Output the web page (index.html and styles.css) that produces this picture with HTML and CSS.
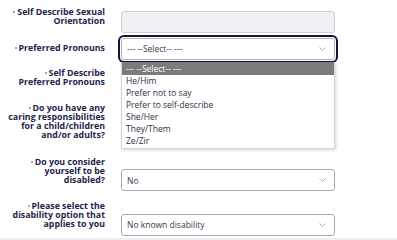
FILE: index.html
```html
<!DOCTYPE html>
<html>
<head>
<meta charset="utf-8">
<link rel="stylesheet" href="styles.css">
</head>
<body>
<div class="form">
  <div class="row r1">
    <label class="lbl"><span class="dot"></span>Self Describe Sexual Orientation</label>
    <div class="field"><div class="input disabled"></div></div>
  </div>
  <div class="row r2">
    <label class="lbl"><span class="dot"></span>Preferred Pronouns</label>
    <div class="field">
      <div class="select focused"><span class="val">--- --Select-- ---</span><svg class="chev" viewBox="0 0 7 4" width="7" height="4"><path d="M0.5 0.5 L3.5 3.3 L6.5 0.5" fill="none" stroke="#9a98a8" stroke-width="0.8"/></svg></div>
      <ul class="menu">
        <li class="hl">--- --Select-- ---</li>
        <li>He/Him</li>
        <li>Prefer not to say</li>
        <li>Prefer to self-describe</li>
        <li>She/Her</li>
        <li>They/Them</li>
        <li>Ze/Zir</li>
      </ul>
    </div>
  </div>
  <div class="row r3">
    <label class="lbl"><span class="dot"></span>Self Describe Preferred Pronouns</label>
    <div class="field"><div class="input"></div></div>
  </div>
  <div class="row r4">
    <label class="lbl"><span class="dot"></span>Do you have any caring responsibilities for a child/children and/or adults?</label>
    <div class="field"><div class="select"></div></div>
  </div>
  <div class="row r5">
    <label class="lbl"><span class="dot"></span>Do you consider yourself to be disabled?</label>
    <div class="field"><div class="select"><span class="val">No</span><svg class="chev" viewBox="0 0 7 4" width="7" height="4"><path d="M0.5 0.5 L3.5 3.3 L6.5 0.5" fill="none" stroke="#9a98a8" stroke-width="0.8"/></svg></div></div>
  </div>
  <div class="row r6">
    <label class="lbl"><span class="dot"></span>Please select the disability option that applies to you</label>
    <div class="field"><div class="select"><span class="val">No known disability</span><svg class="chev" viewBox="0 0 7 4" width="7" height="4"><path d="M0.5 0.5 L3.5 3.3 L6.5 0.5" fill="none" stroke="#9a98a8" stroke-width="0.8"/></svg></div></div>
  </div>
</div>
<div class="strip"></div>
</body>
</html>
```
FILE: styles.css
```css
html, body {
  margin: 0;
  padding: 0;
  background: #ffffff;
}
body {
  width: 397px;
  height: 240px;
  overflow: hidden;
  font-family: "Open Sans", "Noto Sans", sans-serif;
  position: relative;
}
.form {
  display: flex;
  flex-direction: column;
  padding-top: 8px;
}
.row {
  display: flex;
  align-items: flex-end;
  margin-bottom: 11px;
}
.row.r1 { margin-bottom: 5px; }
.row.r2 { margin-bottom: 9px; }
.lbl {
  width: 100px;
  margin-left: 5px;
  margin-right: 16px;
  flex: none;
  text-align: right;
  font-weight: 700;
  font-size: 8.8px;
  line-height: 9px;
  color: #1e1e4c;
  padding-bottom: 6.5px;
}
.dot {
  display: inline-block;
  width: 2px;
  height: 2px;
  border-radius: 50%;
  background: #8a8a98;
  margin-right: 2px;
  vertical-align: 2px;
}
.field {
  width: 214px;
  flex: none;
  position: relative;
}
.input, .select {
  box-sizing: border-box;
  height: 22px;
  border: 1px solid #aaa6ba;
  border-radius: 3px;
  background: #fff;
}
.input.disabled {
  background: #f1f0f4;
  border-color: #cfcdd8;
}
.select {
  display: flex;
  align-items: center;
  justify-content: space-between;
  padding: 0 8px 0 5px;
  font-size: 8.5px;
  color: #3a3a48;
}
.select.focused {
  outline: 2px solid #14143c;
  outline-offset: 1px;
  border-color: #b4b0c4;
}
.chev { display: block; }
.menu {
  position: absolute;
  left: 0;
  top: 24px;
  width: 214px;
  box-sizing: border-box;
  margin: 0;
  padding: 0;
  list-style: none;
  background: #fff;
  border: 1px solid #d4d4d4;
  border-top: none;
  box-shadow: 1px 1px 3px rgba(0,0,0,0.18);
  z-index: 2;
}
.menu li {
  height: 12.2px;
  line-height: 12.2px;
  padding-left: 4px;
  font-size: 8.5px;
  color: #2e2e44;
  white-space: nowrap;
}
.menu li.hl {
  background: #7b7b7b;
  color: #ffffff;
  height: 13px;
  line-height: 13px;
}
.strip {
  position: absolute;
  left: 0;
  right: 0;
  bottom: 0;
  height: 2px;
  background: #f0f0f2;
}
```
